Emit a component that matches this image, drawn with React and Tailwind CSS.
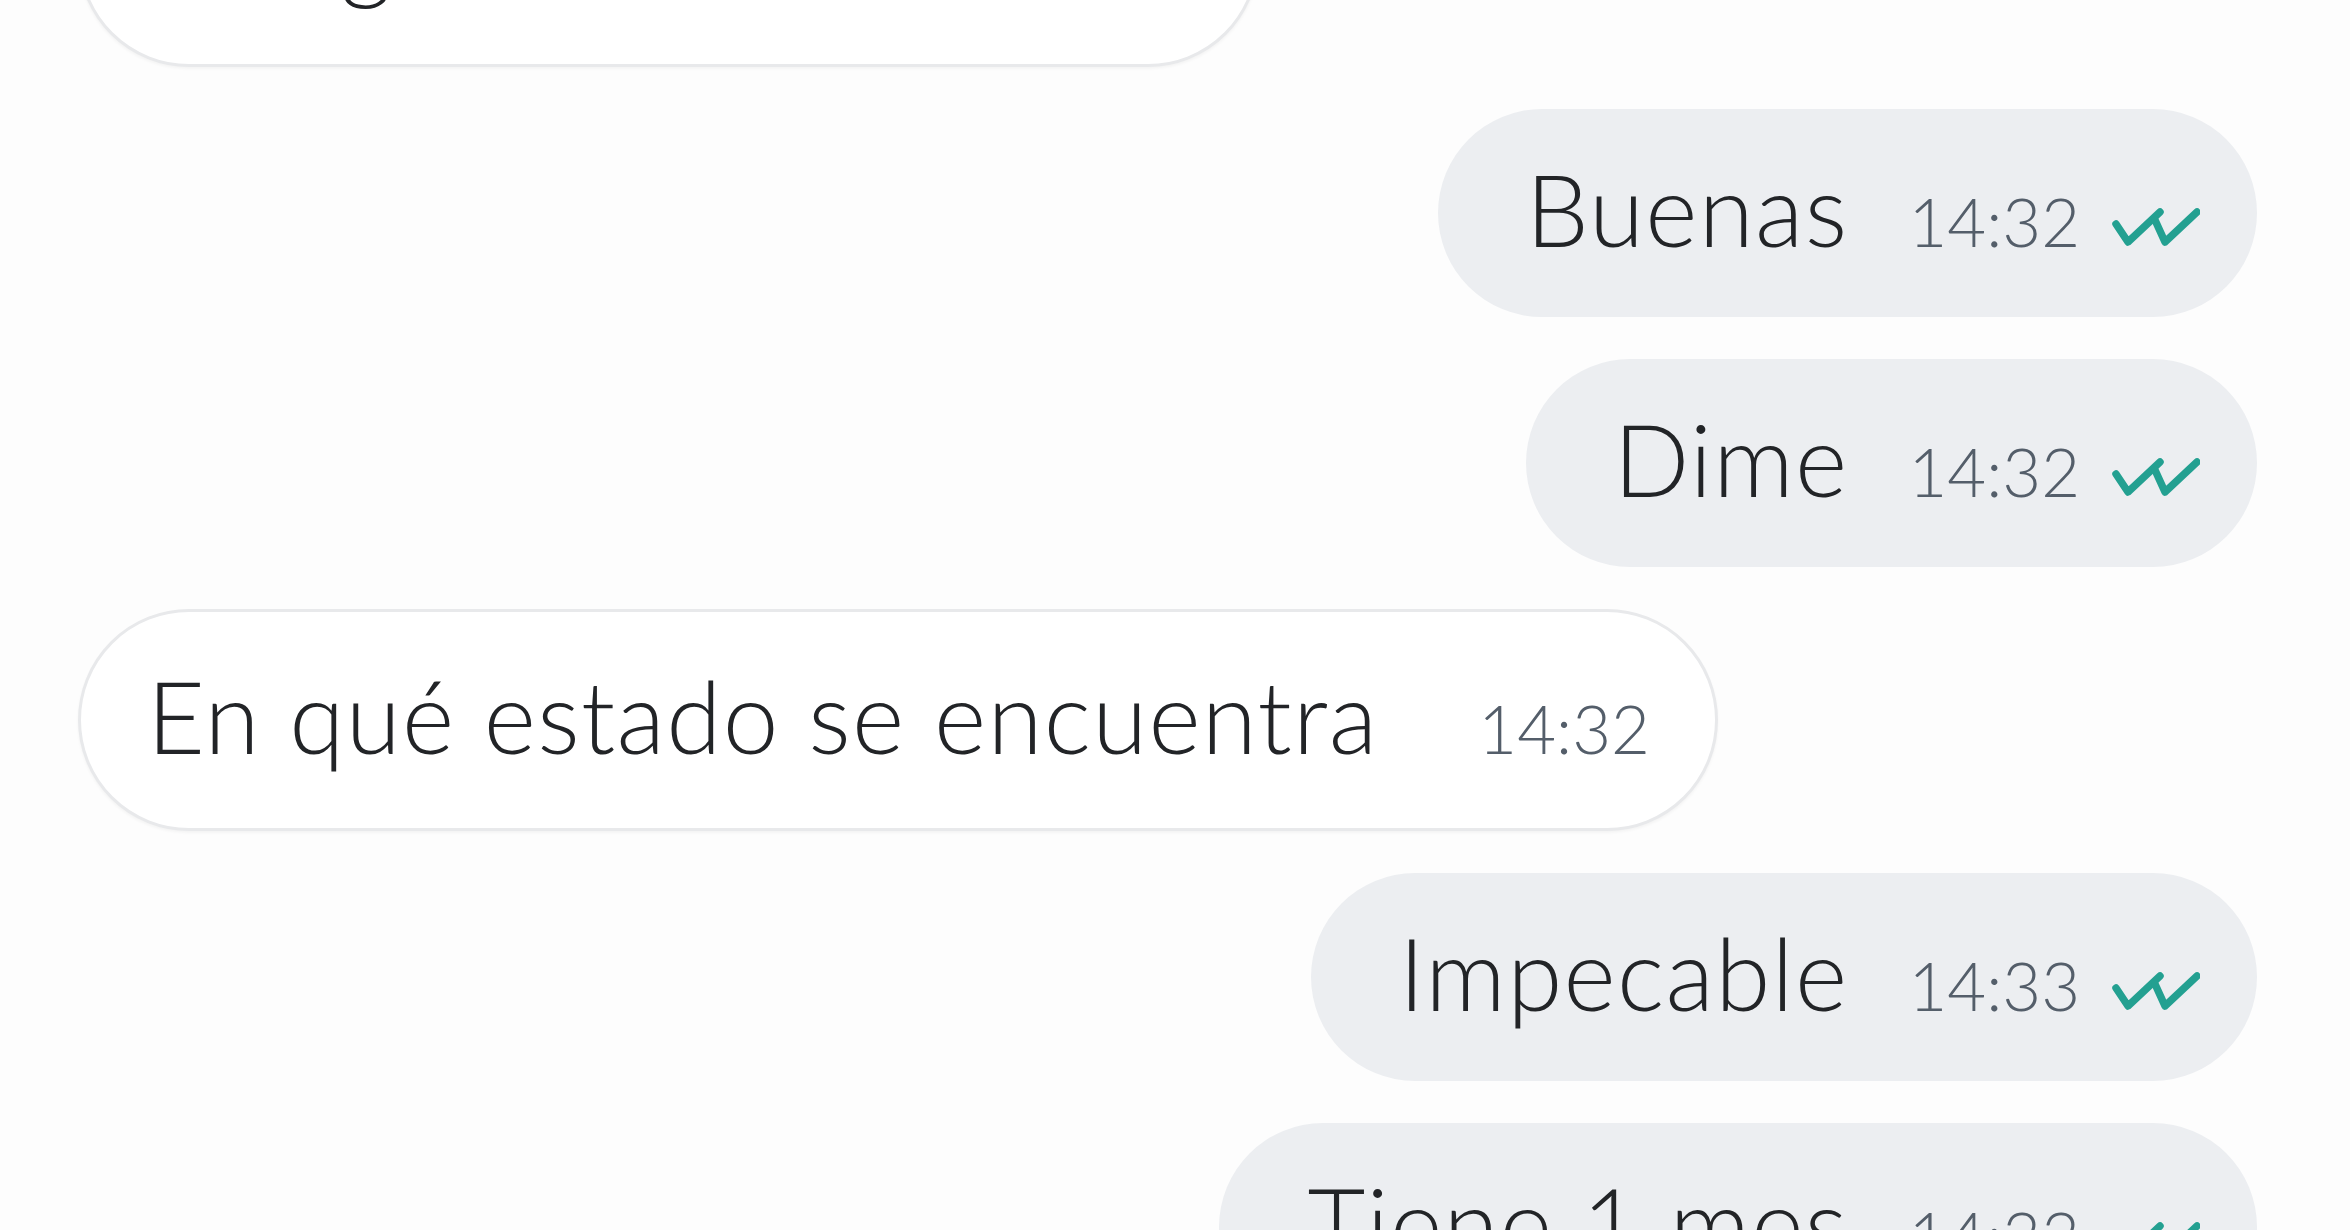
import React from "react";

const font = { fontFamily: "Lato, 'Noto Sans', sans-serif" };

function Checks() {
  return (
    <svg width="88" height="40" viewBox="0 0 88 40" className="ml-[32px] mb-[1px] shrink-0" fill="none">
      <path d="M4 17 L16 35 L48 5" stroke="#23a091" strokeWidth="7.5" strokeLinecap="round" strokeLinejoin="round" />
      <path d="M43 13 L53 35 L85 5" stroke="#23a091" strokeWidth="7.5" strokeLinecap="round" strokeLinejoin="round" />
    </svg>
  );
}

function Outgoing({ text, time }) {
  return (
    <div className="flex justify-end">
      <div className="h-[208px] rounded-full bg-[#eceef1] flex items-center pl-[88px] pr-[57px] pb-[10px]">
        <div className="flex items-baseline whitespace-nowrap">
          <span className="text-[100px] leading-none font-light tracking-[1.3px] text-[#222427]">{text}</span>
          <span className="ml-[60px] text-[67px] leading-none font-light text-[#545e6a]">{time}</span>
          <Checks />
        </div>
      </div>
    </div>
  );
}

function Incoming({ text, time, gap = "ml-[100px]", track = "tracking-[1.3px]" }) {
  return (
    <div className="flex justify-start">
      <div className="h-[222px] rounded-full bg-white border-[3px] border-[#e8e9eb] shadow-[0_2px_3px_rgba(0,0,0,0.04)] flex items-center pl-[66px] pr-[65px] pb-[10px]">
        <div className="flex items-baseline whitespace-nowrap">
          <span className={"text-[100px] leading-none font-light text-[#222427] " + track}>{text}</span>
          <span className={"text-[67px] leading-none font-light text-[#545e6a] " + gap}>{time}</span>
        </div>
      </div>
    </div>
  );
}

export default function App() {
  return (
    <div className="w-[2350px] h-[1230px] overflow-hidden bg-[#fdfdfd]" style={font}>
      <div className="flex flex-col gap-[42px] mt-[-155px] pl-[78px] pr-[93px]">
        <Incoming text="Lo sigues teniendo" time="14:31" gap="ml-[70px]" track="tracking-[0px]" />
        <Outgoing text="Buenas" time="14:32" />
        <Outgoing text="Dime" time="14:32" />
        <Incoming text="En qué estado se encuentra" time="14:32" />
        <Outgoing text="Impecable" time="14:33" />
        <Outgoing text="Tiene 1 mes" time="14:33" />
      </div>
    </div>
  );
}
